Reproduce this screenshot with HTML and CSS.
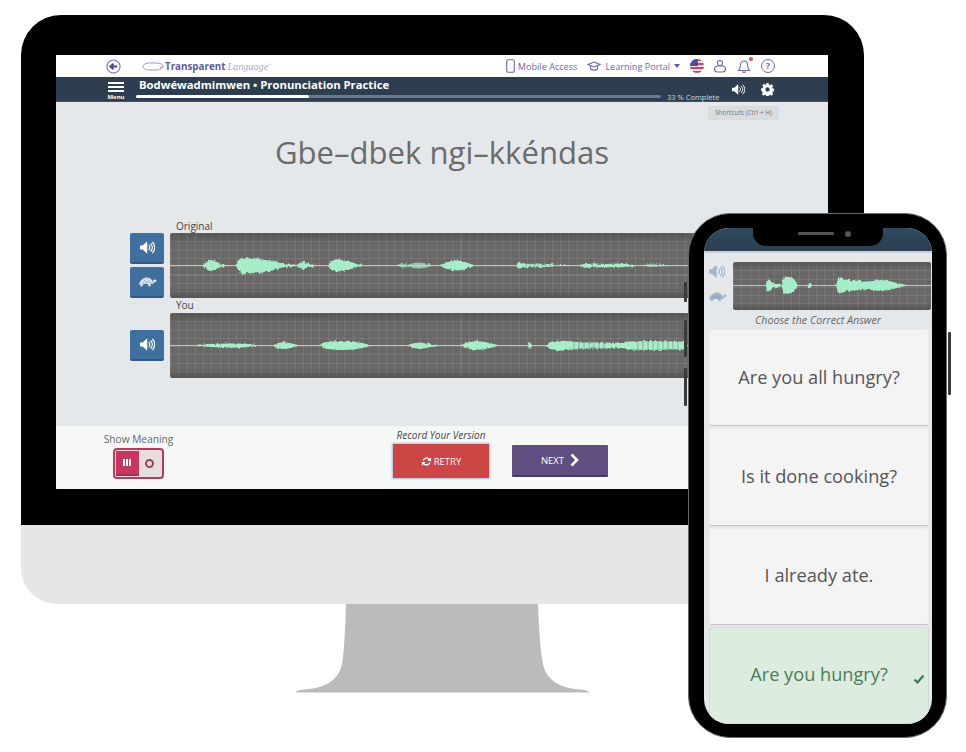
FILE: index.html
```html
<!DOCTYPE html>
<html dir="ltr" lang="en">
<head>
	<meta charset="UTF-8">
	<meta name="viewport" content="width=device-width">
	<title>Pronunciation Practice</title>
	<link rel="stylesheet" href="styles.css">
</head>
<body>
<svg class="defs" width="0" height="0" aria-hidden="true">
	<filter id="rough" x="-10%" y="-40%" width="120%" height="180%">
		<feTurbulence type="fractalNoise" baseFrequency=".45 .3" numOctaves="2" seed="4"/>
		<feDisplacementMap in="SourceGraphic" scale="3.500" xChannelSelector="R" yChannelSelector="G"/>
		<feGaussianBlur stdDeviation=".3"/>
	</filter>
	<symbol id="speaker" viewBox="0 0 20 16">
		<path d="M0 5.200h3.600L8.400.6c.6-.5 1.300-.2 1.300.6v13.600c0 .8-.7 1.100-1.300.6l-4.800-4.600H0z" fill="currentColor"/>
		<path d="M12 5c1.600 1.600 1.600 4.400 0 6M14.400 3c2.800 2.800 2.800 7.200 0 10M16.800 1c3.800 3.800 3.800 10.200 0 14" fill="none" stroke="currentColor" stroke-width="1.500" stroke-linecap="round"/>
	</symbol>
	<symbol id="turtle" viewBox="0 0 26 14">
		<path d="M1 11C3 5 8 1.500 12.500 1.500c4 0 7 3 8.300 6.500l.5 2.500H17l.8 3h-3.300l-1.200-3H7.500L6 13.500H2.800l1-3z" fill="currentColor"/>
		<path d="M20.500 6c1-2 3.800-2.300 4.800-.6.5 1-.3 1.800-1.300 2.200l-2.600 1.200z" fill="currentColor"/>
		<path d="M5 9l3.600-3 3.600 3-2.600 1.400zM9 5.500L12 2.800l3.200 2.700L13 8.500zM13.500 9l2.300-3L19.500 9.800z" fill="none" stroke="#7f98b2" stroke-width=".6"/>
	</symbol>
</svg>

<div class="monitor">
	<div class="bezel">
		<div class="screen">
			<div class="topbar">
				<div class="topbar-left">
					<svg class="back" viewBox="0 0 16 16"><circle cx="8" cy="8" r="7" fill="none" stroke="#7d74b6" stroke-width="1.200"/><path d="M12 8H6M8 5L4.600 8 8 11" fill="none" stroke="#4f478f" stroke-width="2"/></svg>
					<div class="logo">
						<svg class="swoosh" viewBox="0 0 22 9"><path d="M8 1h6c4 0 7 1.500 7 3.500S18 8 13 8H7C3 8 1 6.500 1 4.500S4 1 8 1zM21 4l-3 2" fill="none" stroke="#8f8ac0" stroke-width=".9"/></svg>
						<span class="logo-main">Transparent</span>
						<span class="logo-sub">Language<sup>&reg;</sup></span>
					</div>
				</div>
				<div class="topbar-right">
					<svg class="top-icon phone-icon" viewBox="0 0 9 14"><rect x=".7" y=".7" width="7.600" height="12.600" rx="1.500" fill="none" stroke="#6f66b0" stroke-width="1.100"/></svg>
					<span class="top-link">Mobile Access</span>
					<svg class="top-icon cap-icon" viewBox="0 0 14 11"><path d="M7 1l6 2.500L7 6 1 3.500zM3.500 5v3c1.500 1.500 5.500 1.500 7 0V5" fill="none" stroke="#6f66b0" stroke-width="1.100"/></svg>
					<span class="top-link">Learning Portal</span>
					<span class="caret"></span>
					<span class="flag"><span class="canton"></span></span>
					<svg class="top-icon round-icon" viewBox="0 0 14 14"><circle cx="7" cy="4" r="2.500" fill="none" stroke="#6f66b0" stroke-width="1.100"/><rect x="1.500" y="7" width="11" height="6" rx="3" fill="none" stroke="#6f66b0" stroke-width="1.100"/></svg>
					<span class="bell">
						<svg class="top-icon round-icon" viewBox="0 0 14 14"><path d="M1.500 11.500c1.500-1.500 2-3 2-5.500s1.500-4 3.500-4 3.500 1.500 3.500 4 .5 4 2 5.500zM5.500 12.500c.5 1.200 2.500 1.200 3 0" fill="none" stroke="#6f66b0" stroke-width="1.100"/></svg>
						<span class="bell-dot"></span>
					</span>
					<span class="help">?</span>
				</div>
			</div>

			<div class="titlebar">
				<div class="menu">
					<span class="burger"></span>
					<span class="menu-label">Menu</span>
				</div>
				<div class="title-main">
					<div class="title-text">Bodwéwadmimwen &bull; Pronunciation Practice</div>
					<div class="progress-row">
						<div class="progress"><div class="progress-fill"></div></div>
						<span class="progress-label">33 % Complete</span>
					</div>
				</div>
				<div class="title-tools">
					<svg class="tool"><use href="#speaker"/></svg>
					<svg class="tool" viewBox="0 0 14 14"><path d="M5.800 0h2.400l.4 1.900 1.200.5 1.600-1 1.700 1.700-1 1.600.5 1.200 1.900.4v2.400l-1.900.4-.5 1.200 1 1.600-1.700 1.700-1.600-1-1.200.5-.4 1.900H5.800l-.4-1.900-1.200-.5-1.600 1-1.700-1.700 1-1.600-.5-1.200L0 8.200V5.800l1.900-.4.500-1.200-1-1.600 1.700-1.700 1.600 1 1.200-.5zM7 4.700a2.300 2.300 0 1 0 0 4.600 2.300 2.300 0 0 0 0-4.600z" fill="#fff" fill-rule="evenodd"/></svg>
				</div>
			</div>

			<div class="lesson">
				<div class="tooltip">Shortcuts (Ctrl + H)</div>
				<h1 class="phrase">Gbe&ndash;dbek ngi&ndash;kkéndas</h1>

				<div class="track track-first">
					<div class="track-label">Original</div>
					<div class="track-btns">
						<button class="play"><svg class="play-icon"><use href="#speaker"/></svg></button>
						<button class="play"><svg class="play-icon turtle-icon"><use href="#turtle"/></svg></button>
					</div>
					<div class="wave">
						<svg class="wave-svg" viewBox="0 0 620 65" preserveAspectRatio="none">
							<path class="wave-line" d="M0 32.500H540"/>
							<path class="wave-fill" d="M32 32.500L36 30 38 27.500 41 27 44 28 47 29 50 31 56 32 56 33 50 34 47 36 44 37 41 38 38 37.500 36 35Z"/>
							<path class="wave-fill" d="M66 32.500L68 28 71 25 74 26 77 24 81 26 85 25 90 26 95 27 100 27 104 28 110 30 118 31.500 130 32 130 33 118 33.500 110 35 104 37 100 38 95 39 90 40 85 39 81 41 77 39 74 41.500 71 40 68 37Z"/>
							<path class="wave-fill" d="M126 32.500L130 30 133 28 136 30 140 31 146 32 146 33 140 34 136 35 133 37 130 35Z"/>
							<path class="wave-fill" d="M158 32.500L160 29 164 27 168 26 172 27 178 28 184 30 192 32 192 33 184 35 178 37 172 38 168 39 164 38 160 36Z"/>
							<path class="wave-fill faded" d="M226 32.500L232 30 240 31 246 29.500 254 30 262 32 262 33 254 35 246 35.500 240 34 232 35Z"/>
							<path class="wave-fill" d="M270 32.500L274 30 280 28.500 286 27.500 292 28 298 30 304 32 304 33 298 35 292 37 286 37.500 280 36.500 274 35Z"/>
							<path class="wave-fill" d="M346 32.500L348 29.500 352 30 358 31 366 30.500 378 31 392 32 400 32 400 33 392 33 378 34 366 34.500 358 34 352 35 348 35.500Z"/>
							<path class="wave-ticks" d="M356 30v5M360 30v5M364 30v5M368 30.500v4M372 30.500v4M376 30.500v4M380 31v3M384 31v3M388 31v3"/>
							<path class="wave-fill" d="M408 32.500L414 31 424 30.500 436 31 446 30.500 456 31 466 32 466 33 456 34 446 34.500 436 34 424 34.500 414 34Z"/>
							<path class="wave-fill" d="M470 32.500L478 31.500 490 31.500 498 32.500 490 33.500 478 33.500Z"/>
						</svg>
					</div>
				</div>

				<div class="track track-second">
					<div class="track-label">You</div>
					<div class="track-btns track-btns-center">
						<button class="play"><svg class="play-icon"><use href="#speaker"/></svg></button>
					</div>
					<div class="wave">
						<svg class="wave-svg" viewBox="0 0 620 65" preserveAspectRatio="none">
							<path class="wave-line" d="M0 32.500H540"/>
							<path class="wave-fill" d="M26 32.500L40 31 60 30.500 74 30.500 86 32 86 33 74 34.500 60 34.500 40 34Z"/>
							<path class="wave-fill" d="M102 32.500L108 30 114 29 120 30 128 32 128 33 120 35 114 36 108 35Z"/>
							<path class="wave-fill" d="M150 32.500L154 29.500 162 28.500 172 28 184 28.500 192 30 200 32 200 33 192 35 184 36.500 172 37 162 36.500 154 35.500Z"/>
							<path class="wave-fill" d="M236 32.500L242 30.500 250 29.500 258 30.500 268 32 268 33 258 34.500 250 36 242 34.500Z"/>
							<path class="wave-fill" d="M290 32.500L296 30 304 28 312 28.500 320 30 328 32 328 33 320 35 312 36.500 304 37 296 35Z"/>
							<path class="wave-fill" d="M358 32.500L359 29.500 361 29.500 362 32.500 361 35.500 359 35.500Z"/>
							<path class="wave-fill" d="M376 32.500L380 29 390 27.500 402 28.500 412 29.500 430 29.500 452 30 458 28.500 480 28 500 28.500 516 28.500 516 36.500 500 36.500 480 37 458 36.500 452 35 430 35.500 412 35.500 402 36.500 390 37.500 380 36Z"/>
							<path class="wave-ticks" d="M404 29v7M409 29.500v6M414 29.500v6M419 29.500v6M424 29.500v6M429 29.500v6M434 29.500v6M468 28v9M473 27.500v10M478 27.500v10M483 27.500v10M488 27.500v10M493 27.500v10M498 27.500v10M503 27.500v10M508 27.500v10"/>
						</svg>
					</div>
				</div>
			</div>

			<div class="controls">
				<div class="meaning">
					<span class="meaning-label">Show Meaning</span>
					<div class="toggle">
						<span class="toggle-on"><i></i><i></i><i></i></span>
						<span class="toggle-off"><b></b></span>
					</div>
				</div>
				<div class="record">
					<span class="record-label">Record Your Version</span>
					<button class="action retry">
						<svg class="retry-icon" viewBox="0 0 12 12"><path d="M1.500 5C2 3 4 1.500 6 1.500c1.500 0 2.500.6 3.300 1.500L11 1.500V5.500H7l1.500-1.500C8 3.400 7 3 6 3 4.800 3 3.800 3.800 3.300 5zM10.500 7C10 9 8 10.500 6 10.500c-1.500 0-2.500-.6-3.300-1.500L1 10.500V6.500h4L3.500 8C4 8.600 5 9 6 9c1.200 0 2.200-.8 2.700-2z" fill="#fff"/></svg>
						RETRY
					</button>
				</div>
				<button class="action next">
					NEXT
					<svg class="next-icon" viewBox="0 0 9 14"><path d="M1.500 1.500L7 7l-5.500 5.500" fill="none" stroke="#fff" stroke-width="2.600"/></svg>
				</button>
			</div>
		</div>
	</div>
	<div class="chin"></div>
	<svg class="stand" viewBox="0 0 293 89"><path d="M50 0H242C243 30 245 50 247 60 251 78 265 84 285 85.500 290 86 293 87 293 88.500H0C0 87 3 86 8 85.500 28 84 42 78 46 60 48 50 49 30 50 0Z" fill="#bbb"/></svg>
</div>

<div class="phone">
	<span class="side side-a"></span>
	<span class="side side-b"></span>
	<span class="side side-c"></span>
	<span class="side side-d"></span>
	<div class="notch"><span class="earpiece"></span><span class="camera"></span></div>
	<div class="phone-screen">
		<div class="phone-head"></div>
		<div class="phone-wave-row">
			<div class="phone-tools">
				<svg class="phone-tool"><use href="#speaker"/></svg>
				<svg class="phone-tool phone-turtle"><use href="#turtle"/></svg>
			</div>
			<div class="wave phone-wave">
				<svg class="wave-svg" viewBox="0 0 198 48" preserveAspectRatio="none">
					<path class="wave-line" d="M0 23.500H198"/>
					<path class="wave-fill" d="M33 23.500L34 18 36 17.500 38 19 40 22 46 21.500 48 23.500 46 25.500 40 25 38 28 36 29.500 34 29Z"/>
					<path class="wave-fill" d="M49 23.500L50 17 52 14.500 56 14 60 16 63 20 65 23.500 63 27 60 30 56 32 52 32 50 30Z"/>
					<path class="wave-fill" d="M75 23.500L77 20.500 79 23.500 77 26.500Z"/>
					<path class="wave-fill" d="M103 23.500L105 17 108 15 112 17.500 120 18.500 132 19.500 140 19 148 18 156 19 164 21 174 23 180 23.500 174 24 164 26 156 28 148 29 140 28 132 27.500 120 28.500 112 29.500 108 31 105 30Z"/>
				</svg>
			</div>
		</div>
		<div class="prompt">Choose the Correct Answer</div>
		<div class="answers">
			<div class="answer">Are you all hungry?</div>
			<div class="answer">Is it done cooking?</div>
			<div class="answer">I already ate.</div>
			<div class="answer correct">
				Are you hungry?
				<svg class="check" viewBox="0 0 12 10"><path d="M1.500 5.500l3 3L10.500 1.500" fill="none" stroke="#3f7a46" stroke-width="2.200"/></svg>
			</div>
		</div>
	</div>
</div>
</body>
</html>
```

FILE: styles.css
```css
* { box-sizing: border-box; }

html, body {
	margin: 0;
	height: 100%;
	overflow: hidden;
}

body {
	position: relative;
	background: #fff;
	font-family: "Open Sans", sans-serif;
	color: #555;
}

.defs { position: absolute; }

button {
	font-family: inherit;
	border: 0;
	padding: 0;
}

/* monitor */
.monitor {
	width: 843px;
	margin: 15px 0 0 21px;
}

.bezel {
	height: 510px;
	padding: 40px 36px 36px 35px;
	background: #000;
	border-radius: 40px 40px 0 0;
}

.chin {
	height: 79px;
	background: #e6e6e6;
	border-radius: 0 0 36px 36px;
}

.stand {
	display: block;
	width: 293px;
	height: 89px;
	margin-left: 275px;
}

.screen {
	display: flex;
	flex-direction: column;
	height: 434px;
	background: #e4e8ea;
}

/* top links */
.topbar {
	display: flex;
	justify-content: space-between;
	align-items: center;
	height: 22px;
	padding: 0 53px 0 50px;
	background: #fff;
}

.topbar-left, .topbar-right, .logo {
	display: flex;
	align-items: center;
}

.back { width: 15px; height: 15px; }

.logo { margin-left: 21px; }

.swoosh { width: 22px; height: 9px; margin-right: 1px; }

.logo-main {
	font-size: 9.800px;
	font-weight: 700;
	color: #5d5a9e;
}

.logo-sub {
	margin-left: 2px;
	font-family: "Liberation Serif", serif;
	font-size: 10.200px;
	font-style: italic;
	color: #a9a6cc;
}

.logo-sub sup { font-size: 4px; }

.top-icon { display: block; }

.phone-icon { width: 9px; height: 14px; margin-right: 3px; }

.cap-icon { width: 14px; height: 11px; margin: 0 4px 0 10px; }

.top-link {
	font-size: 9.100px;
	color: #6f66b0;
	white-space: nowrap;
}

.caret {
	width: 0;
	height: 0;
	margin: 0 10px 0 4px;
	border: 3.500px solid transparent;
	border-top: 4px solid #6056a8;
	border-bottom: 0;
}

.flag {
	position: relative;
	width: 14px;
	height: 14px;
	margin-right: 9px;
	overflow: hidden;
	border-radius: 50%;
	background: repeating-linear-gradient(#c8455c 0 2px, #e8e4ee 2px 4px);
}

.canton {
	position: absolute;
	top: 0;
	left: 0;
	width: 8px;
	height: 7px;
	background: #4a4f9b;
}

.round-icon { width: 14px; height: 14px; }

.bell {
	position: relative;
	margin: 0 10px;
}

.bell-dot {
	position: absolute;
	top: -2px;
	right: -2px;
	width: 4px;
	height: 4px;
	border-radius: 50%;
	background: #e2543e;
}

.help {
	width: 14px;
	height: 14px;
	border: 1.200px solid #6f66b0;
	border-radius: 50%;
	font-size: 9px;
	font-weight: 700;
	line-height: 12px;
	text-align: center;
	color: #6f66b0;
}

/* title bar */
.titlebar {
	display: flex;
	height: 25px;
	padding-left: 51px;
	background: #2c3e50;
	border-bottom: 1px solid #3f5366;
	color: #fff;
}

.menu {
	display: flex;
	flex-direction: column;
	align-items: center;
	width: 18px;
	padding-top: 5px;
}

.burger {
	width: 16px;
	height: 10px;
	border-top: 2px solid #fff;
	border-bottom: 2px solid #fff;
	background: linear-gradient(#fff, #fff) center / 100% 2px no-repeat;
}

.menu-label {
	margin-top: 1px;
	font-size: 6px;
	font-weight: 700;
	line-height: 8px;
}

.title-main {
	width: 596px;
	margin-left: 11px;
}

.title-text {
	margin: 1px 0 0 3px;
	font-size: 11.300px;
	font-weight: 700;
	line-height: 14px;
	white-space: nowrap;
}

.progress-row {
	display: flex;
	align-items: center;
	height: 9px;
}

.progress {
	width: 525px;
	height: 3px;
	border-radius: 2px;
	background: #6d7b88;
}

.progress-fill {
	width: 33%;
	height: 100%;
	border-radius: 2px;
	background: #fff;
}

.progress-label {
	margin-left: 6px;
	font-size: 7.500px;
	color: #d5dade;
	white-space: nowrap;
}

.title-tools {
	display: flex;
	gap: 16px;
	padding-top: 6px;
}

.tool {
	width: 13px;
	height: 13px;
	color: #fff;
}

/* lesson */
.lesson {
	position: relative;
	flex: 1;
	padding-left: 74px;
	background: #e4e8ea;
}

.tooltip {
	position: absolute;
	top: 4px;
	left: 652px;
	width: 71px;
	height: 14px;
	background: #d9dde0;
	font-size: 6.500px;
	line-height: 14px;
	text-align: center;
	color: #777;
}

.phrase {
	margin: 28px 0 0 -74px;
	font-size: 31.100px;
	font-weight: 400;
	line-height: 44px;
	text-align: center;
	color: #6b6b6b;
}

.track {
	display: grid;
	grid-template-columns: 34px 660px;
	column-gap: 6px;
}

.track-first { margin-top: 45px; }

.track-label {
	grid-column: 2;
	padding-left: 6px;
	font-size: 10px;
	line-height: 14px;
	color: #444;
}

.track-second .track-label { line-height: 15px; }

.track-btns {
	display: flex;
	flex-direction: column;
	justify-content: space-between;
}

.track-btns-center { justify-content: center; }

.play {
	display: flex;
	align-items: center;
	justify-content: center;
	width: 34px;
	height: 31px;
	border-bottom: 2px solid #2f5a85;
	border-radius: 2px;
	background: #3f6f9f;
	color: #fff;
}

.play-icon { width: 15px; height: 13px; }

.turtle-icon { width: 19px; height: 11px; color: #dfe6ec; }

.wave {
	height: 65px;
	border-radius: 2px;
	background-color: #6a6866;
	background-image:
		linear-gradient(rgba(40, 40, 40, .3), transparent 16%, transparent 84%, rgba(40, 40, 40, .3)),
		repeating-linear-gradient(90deg, rgba(255, 255, 255, .09) 0 1px, transparent 1px 8.300px),
		repeating-linear-gradient(rgba(255, 255, 255, .09) 0 1px, transparent 1px 8.300px);
}

.wave-svg {
	display: block;
	width: 620px;
	height: 65px;
}

.wave-line {
	fill: none;
	stroke: #a6edc9;
	stroke-width: 1;
	opacity: .85;
}

.wave-fill {
	fill: #a6edc9;
	filter: url(#rough);
}

.faded { opacity: .7; }

.wave-ticks {
	fill: none;
	stroke: #6a6866;
	stroke-width: .8;
	opacity: .6;
}

/* bottom controls */
.controls {
	display: flex;
	height: 63px;
	padding-left: 48px;
	background: #f6f8f8;
}

.meaning {
	display: flex;
	flex-direction: column;
	align-items: center;
	width: 69px;
	padding-top: 6px;
}

.meaning-label {
	font-size: 10.200px;
	line-height: 15px;
	white-space: nowrap;
	color: #666;
}

.toggle {
	display: flex;
	width: 51px;
	height: 31px;
	margin: 1px 0 0 -1px;
	padding: 1px;
	overflow: hidden;
	border: 2px solid #b9385c;
	border-radius: 4px;
	background: #e6dede;
}

.toggle-on {
	display: flex;
	align-items: center;
	justify-content: center;
	gap: 1.500px;
	width: 23px;
	border-bottom: 2px solid #a62d4d;
	background: #c9365d;
}

.toggle-on i {
	width: 1.500px;
	height: 7px;
	background: #fff;
}

.toggle-off {
	display: flex;
	flex: 1;
	align-items: center;
	justify-content: center;
}

.toggle-off b {
	width: 9px;
	height: 9px;
	border: 2px solid #a63d59;
	border-radius: 50%;
}

.record {
	display: flex;
	flex-direction: column;
	align-items: center;
	width: 96px;
	margin-left: 220px;
	padding-top: 2px;
}

.record-label {
	font-size: 10px;
	font-style: italic;
	line-height: 14px;
	white-space: nowrap;
	color: #444;
}

.action {
	display: flex;
	align-items: center;
	justify-content: center;
	font-size: 9.500px;
	color: #fff;
}

.retry {
	width: 96px;
	height: 34px;
	margin-top: 2px;
	background: #cc4646;
	box-shadow: 0 0 2px 1px #9cc3e6;
}

.retry-icon { width: 11px; height: 11px; margin-right: 2px; }

.next {
	width: 96px;
	height: 32px;
	margin: 19px 0 0 23px;
	border-bottom: 2px solid #463a66;
	border-radius: 1px;
	background: #5e4f80;
}

.next-icon { width: 9px; height: 14px; margin-left: 6px; }

/* phone */
.phone {
	position: absolute;
	top: 213px;
	left: 688px;
	width: 259px;
	height: 525px;
	padding: 14px 14px 13px 15px;
	border: 1.500px solid #6a6a6a;
	border-radius: 42px;
	background: #000;
}

.side {
	position: absolute;
	width: 3px;
	border-radius: 1px;
	background: #3a3a3a;
}

.side-a { top: 68px; left: -5px; height: 20px; }
.side-b { top: 106px; left: -5px; height: 37px; }
.side-c { top: 154px; left: -5px; height: 38px; }
.side-d { top: 118px; right: -5px; height: 63px; }

.notch {
	position: absolute;
	top: 14px;
	left: 64px;
	z-index: 1;
	display: flex;
	align-items: center;
	gap: 11px;
	width: 130px;
	height: 18px;
	padding: 0 0 7px 45px;
	border-radius: 0 0 13px 13px;
	background: #000;
}

.earpiece {
	width: 36px;
	height: 3.500px;
	border-radius: 2px;
	background: #555;
}

.camera {
	width: 6px;
	height: 6px;
	border-radius: 50%;
	background: #555;
}

.phone-screen {
	display: flex;
	flex-direction: column;
	height: 100%;
	overflow: hidden;
	border-radius: 25px;
	background: #e4e8eb;
}

.phone-head {
	flex: none;
	height: 25px;
	background: linear-gradient(#2e4b60, #2b3e50);
	border-bottom: 2px solid #cdd2da;
}

.phone-wave-row {
	display: flex;
	flex: none;
	padding: 9px 1px 0 5px;
}

.phone-tools {
	display: flex;
	flex-direction: column;
	align-items: center;
	gap: 12px;
	width: 24px;
	padding: 2px 8px 0 0;
}

.phone-tool {
	flex: none;
	width: 16px;
	height: 15px;
	color: #a5b6c8;
}

.phone-turtle { width: 19px; height: 11px; }

.phone-wave {
	flex: 1;
	height: 48px;
}

.phone-wave .wave-svg {
	width: 100%;
	height: 48px;
}

.prompt {
	flex: none;
	height: 19px;
	font-size: 10.700px;
	font-style: italic;
	line-height: 20px;
	text-align: center;
	color: #666;
}

.answers {
	display: flex;
	flex: 1;
	flex-direction: column;
	gap: 2px;
	padding: 0 3px 0 5px;
}

.answer {
	position: relative;
	display: flex;
	flex: 1;
	align-items: center;
	justify-content: center;
	padding-bottom: 2px;
	border: 1px solid #ececec;
	border-bottom: 1.500px solid #c4c4c4;
	border-radius: 3px;
	background: #f4f4f4;
	font-size: 18.200px;
	color: #555;
}

.correct {
	border-color: #cfdcd2;
	background: #dcecdf;
	color: #4d7d55;
}

.check {
	position: absolute;
	top: 46px;
	right: 3px;
	width: 12px;
	height: 10px;
}
```
